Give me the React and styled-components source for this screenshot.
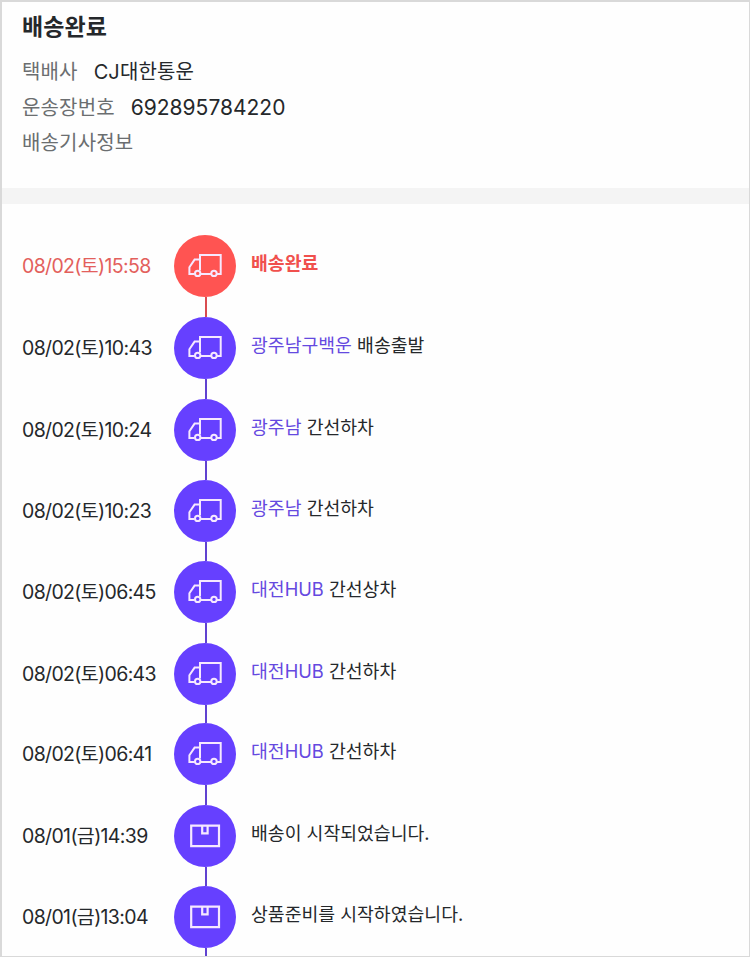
import React from 'react';
import styled, { createGlobalStyle } from 'styled-components';

const PURPLE = '#6640ff';
const RED = '#ff5452';

const steps = [
  { date: '08/02(토)15:58', status: '배송완료', icon: 'truck', height: 82, done: true },
  { date: '08/02(토)10:43', place: '광주남구백운', status: '배송출발', icon: 'truck', height: 82 },
  { date: '08/02(토)10:24', place: '광주남', status: '간선하차', icon: 'truck', height: 81 },
  { date: '08/02(토)10:23', place: '광주남', status: '간선하차', icon: 'truck', height: 81 },
  { date: '08/02(토)06:45', place: '대전HUB', status: '간선상차', icon: 'truck', height: 82 },
  { date: '08/02(토)06:43', place: '대전HUB', status: '간선하차', icon: 'truck', height: 80 },
  { date: '08/02(토)06:41', place: '대전HUB', status: '간선하차', icon: 'truck', height: 82 },
  { date: '08/01(금)14:39', status: '배송이 시작되었습니다.', icon: 'box', height: 81 },
  { date: '08/01(금)13:04', status: '상품준비를 시작하였습니다.', icon: 'box', height: 81 },
];

const TruckIcon = () => (
  <svg width="36" height="26" viewBox="0 0 36 26" fill="none" stroke="#f6e8ff" strokeWidth="2">
    <path d="M13 17.6V2H33.7V21H30M24 21H13.7M7.7 21H2.4V14.2L7.6 6.6H13" />
    <circle cx="10.7" cy="20.4" r="2.7" />
    <circle cx="27" cy="20.4" r="2.7" />
  </svg>
);

const BoxIcon = () => (
  <svg width="32" height="26" viewBox="0 0 32 26" fill="none" stroke="#f6e8ff" strokeWidth="2.2">
    <path d="M2.2 2.6H30V23.2H2.2ZM13.2 2.6V10.4H18.6V2.6" />
  </svg>
);

const App = () => (
  <>
    <GlobalStyle />
    <Page>
      <Summary>
        <Title>배송완료</Title>
        <InfoRow>
          <Label>택배사</Label>
          <Value>CJ대한통운</Value>
        </InfoRow>
        <InfoRow>
          <Label>운송장번호</Label>
          <Value $wide>692895784220</Value>
        </InfoRow>
        <InfoRow>
          <Label>배송기사정보</Label>
        </InfoRow>
      </Summary>
      <Timeline>
        {steps.map(({ date, place, status, icon, height, done }) => (
          <Step key={date} $height={height} $done={done}>
            <StepDate>{date}</StepDate>
            <Track>
              <Badge>{icon === 'truck' ? <TruckIcon /> : <BoxIcon />}</Badge>
              <Line />
            </Track>
            <Status>
              {place && <Place>{place} </Place>}
              {status}
            </Status>
          </Step>
        ))}
      </Timeline>
    </Page>
  </>
);

const GlobalStyle = createGlobalStyle`
  * {
    box-sizing: border-box;
  }
  body {
    margin: 0;
    background: #fff;
  }
`;

const Page = styled.div`
  height: 957px;
  overflow: hidden;
  border: solid #d9d9d9;
  border-width: 2px 1px 1px 2px;
  background: #fefefe;
  color: #25282b;
  font-family: Inter, "Noto Sans CJK KR", sans-serif;
`;

const Summary = styled.section`
  height: 202px;
  padding: 8px 20px 0;
  border-bottom: 16px solid #f4f4f4;
`;

const Title = styled.h1`
  margin: 0 0 10px;
  font-size: 23px;
  font-weight: 700;
  line-height: 34px;
  letter-spacing: 0.1px;
`;

const InfoRow = styled.div`
  display: flex;
  gap: 16px;
  height: 35.5px;
  font-size: 20px;
  line-height: 36px;
`;

const Label = styled.span`
  color: #6b6e70;
  letter-spacing: 0.15px;
`;

const Value = styled.span`
  font-size: ${({ $wide }) => ($wide ? '21px' : '20px')};
  letter-spacing: ${({ $wide }) => ($wide ? '0' : '0.1px')};
`;

const Timeline = styled.ul`
  margin: 0;
  padding: 31px 20px 0;
  list-style: none;
`;

const Track = styled.div`
  display: flex;
  flex-direction: column;
  align-items: center;
`;

const Badge = styled.div`
  display: flex;
  flex: none;
  align-items: center;
  justify-content: center;
  width: 62px;
  height: 62px;
  border-radius: 50%;
`;

const Line = styled.div`
  flex: 1;
  width: 2px;
  margin-left: 2px;
`;

const StepDate = styled.span`
  font-size: 19.5px;
  line-height: 62px;
  letter-spacing: -0.65px;
  white-space: nowrap;
`;

const Status = styled.span`
  padding-left: 15px;
  font-size: 18.3px;
  line-height: 56px;
  white-space: pre;
`;

const Place = styled.span`
  color: #6549e0;
`;

const Step = styled.li`
  display: grid;
  grid-template-columns: 152px 62px 1fr;
  height: ${({ $height }) => $height}px;
  ${Badge} {
    background: ${({ $done }) => ($done ? RED : PURPLE)};
  }
  ${Line} {
    background: ${({ $done }) => ($done ? '#d94c50' : '#6042d0')};
  }
  ${StepDate} {
    color: ${({ $done }) => ($done ? '#e3605c' : 'inherit')};
  }
  ${Status} {
    color: ${({ $done }) => ($done ? '#f0504d' : 'inherit')};
    font-weight: ${({ $done }) => ($done ? 700 : 400)};
  }
`;

export default App;
